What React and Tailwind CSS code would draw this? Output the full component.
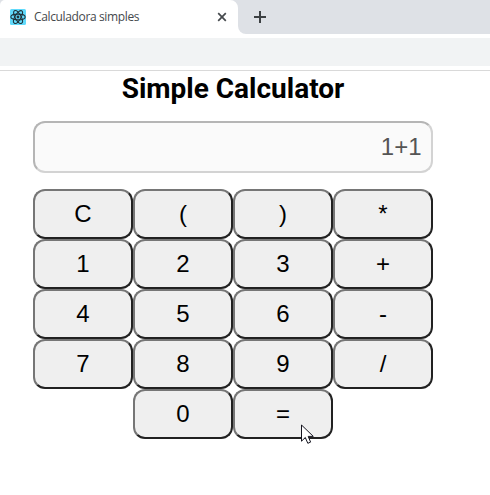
const rows = [
  ["C", "(", ")", "*"],
  ["1", "2", "3", "+"],
  ["4", "5", "6", "-"],
  ["7", "8", "9", "/"],
  ["0", "="],
];

function ReactBadge() {
  return (
    <svg className="h-4 w-4 shrink-0" viewBox="0 0 16 16" fill="none">
      <rect width="16" height="16" rx="1.5" fill="#61dafb" />
      <g stroke="#20333b" strokeWidth="1.1">
        <ellipse cx="8" cy="8" rx="7.2" ry="2.9" />
        <ellipse cx="8" cy="8" rx="7.2" ry="2.9" transform="rotate(60 8 8)" />
        <ellipse cx="8" cy="8" rx="7.2" ry="2.9" transform="rotate(120 8 8)" />
      </g>
      <circle cx="8" cy="8" r="1.4" fill="#20333b" />
    </svg>
  );
}

function BrowserBar() {
  return (
    <header className="bg-white">
      <div className="flex h-[34px] bg-white">
        <div className="w-[238px] bg-[#dee1e6]">
          <div className="flex h-full items-center rounded-tl-[5px] rounded-tr-lg bg-white pl-[10px] pr-[11px]">
            <ReactBadge />
            <span className="ml-2 flex-1 whitespace-nowrap font-['Open_Sans',sans-serif] text-[12px] leading-4 tracking-[-0.36px] text-[#45494d]">
              Calculadora simples
            </span>
            <svg className="h-[10px] w-[10px]" viewBox="0 0 10 10" stroke="#45494d" strokeWidth="1.7">
              <path d="M1.2 1.2 8.8 8.8M8.8 1.2 1.2 8.8" />
            </svg>
          </div>
        </div>
        <div className="flex flex-1 items-center rounded-bl-lg bg-[#dee1e6] pl-4">
          <svg className="h-3 w-3" viewBox="0 0 12 12" stroke="#3c4043" strokeWidth="2">
            <path d="M6 0V12M0 6H12" />
          </svg>
        </div>
      </div>
      <div className="mt-1 h-7 bg-[#f1f3f4]" />
      <div className="h-[5px] border-b border-[#d9d9d9]" />
    </header>
  );
}

function MousePointer() {
  return (
    <svg className="absolute left-[301px] top-[424px] h-[20px] w-[13px]" viewBox="0 0 13 20">
      <path
        d="M.5 1v16.2l3.8-3.7 2.5 5.8 2.8-1.2-2.4-5.7h5.1z"
        fill="#fff"
        stroke="#14141f"
        strokeWidth="1"
      />
    </svg>
  );
}

export default function App() {
  return (
    <div className="relative h-[495px] w-[490px] overflow-hidden bg-white">
      <BrowserBar />
      <main className="ml-[33px] flex w-[400px] flex-col items-center font-['Liberation_Sans',Arial,sans-serif] text-2xl">
        <h1 className="mt-[1px] h-[33px] whitespace-nowrap font-[Roboto,sans-serif] text-[28px] font-bold leading-[33px] text-black">
          Simple Calculator
        </h1>
        <div className="mt-4 flex h-[52px] w-full items-center justify-end rounded-xl border-2 border-b-[#d3d3d3] border-l-[#b5b5b5] border-r-[#d3d3d3] border-t-[#b5b5b5] bg-[#fafafa] pr-[9.5px] text-[#545454]">
          1+1
        </div>
        <div className="mt-4 flex flex-col items-center">
          {rows.map((row) => (
            <div key={row[0]} className="flex">
              {row.map((key) => (
                <button
                  key={key}
                  className="h-[50px] w-[100px] rounded-xl border-2 border-b-[#212121] border-l-[#767676] border-r-[#212121] border-t-[#767676] bg-[#efefef] text-black"
                >
                  {key}
                </button>
              ))}
            </div>
          ))}
        </div>
      </main>
      <MousePointer />
    </div>
  );
}
